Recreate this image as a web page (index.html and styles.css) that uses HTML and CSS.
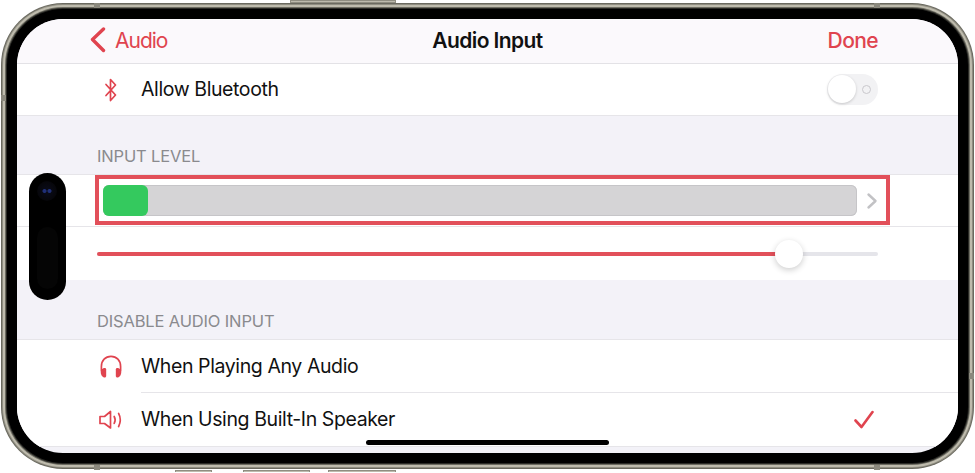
FILE: index.html
```html
<!DOCTYPE html>
<html lang="en">
<head>
    <meta charset="UTF-8">
    <meta name="viewport" content="width=device-width, initial-scale=1.0">
    <title>Audio Input</title>
    <link rel="stylesheet" href="styles.css">
</head>
<body>
    <div class="phone">
        <span class="side-btn top-btn"></span>
        <span class="side-btn bottom-btn-a"></span>
        <span class="side-btn bottom-btn-b"></span>
        <span class="side-btn bottom-btn-c"></span>
        <span class="band band-top-l"></span>
        <span class="band band-top-r"></span>
        <span class="band band-bottom-l"></span>
        <span class="band band-bottom-r"></span>
        <span class="band band-left"></span>
        <span class="band band-right"></span>

        <div class="screen">
            <div class="island"><span class="camera"></span><span class="sensor"></span></div>

            <header class="nav">
                <div class="nav-back">
                    <svg class="back-icon" width="16" height="26" viewBox="0 0 16 26"><path d="M13.5 2 L2.5 12.5 L13.5 23.5"/></svg>
                    <span class="nav-back-text">Audio</span>
                </div>
                <div class="nav-title">Audio Input</div>
                <div class="nav-done">Done</div>
            </header>

            <div class="list">
                <div class="row">
                    <div class="row-icon">
                        <svg width="14" height="26" viewBox="0 0 14 26"><path class="line" d="M2 7.5 L11.5 18 L6.5 23.5 V2.5 L11.5 8 L2 18.5"/></svg>
                    </div>
                    <div class="row-label">Allow Bluetooth</div>
                    <div class="toggle"><span class="toggle-knob"></span><span class="toggle-off"></span></div>
                </div>
            </div>

            <div class="section-title first-title">INPUT LEVEL</div>
            <div class="list">
                <div class="row level-row">
                    <div class="level-bar"><div class="level-fill"></div></div>
                    <svg class="level-chevron" width="12" height="18" viewBox="0 0 12 18"><path d="M2.5 2.5 L9.5 9 L2.5 15.5"/></svg>
                    <div class="callout"></div>
                </div>
                <div class="row slider-row">
                    <div class="slider">
                        <div class="slider-done"></div>
                        <div class="slider-knob"></div>
                    </div>
                </div>
            </div>

            <div class="section-title">DISABLE AUDIO INPUT</div>
            <div class="list">
                <div class="row sep-row">
                    <div class="row-icon">
                        <svg width="24" height="24" viewBox="0 0 24 24">
                            <path class="line" d="M2.4 16 V11.5 C2.4 5.4 6.4 1.4 12 1.4 C17.6 1.4 21.6 5.4 21.6 11.5 V16"/>
                            <path class="fill" d="M5.6 13 C6.7 13 7.2 13.7 7.2 14.6 V20.8 C7.2 21.9 6.5 22.6 5.6 22.6 C3.6 22.6 1.8 20 1.8 17.6 C1.8 15 3.6 13 5.6 13 Z"/>
                            <path class="fill" d="M18.4 13 C17.3 13 16.8 13.7 16.8 14.6 V20.8 C16.8 21.9 17.5 22.6 18.4 22.6 C20.4 22.6 22.2 20 22.2 17.6 C22.2 15 20.4 13 18.4 13 Z"/>
                        </svg>
                    </div>
                    <div class="row-label">When Playing Any Audio</div>
                </div>
                <div class="row last-row">
                    <div class="row-icon">
                        <svg width="24" height="20" viewBox="0 0 24 20">
                            <path class="line" d="M1 6.5 H5.5 L11.5 1.5 V18 L5.5 13.5 H1 Z"/>
                            <path class="line" d="M15.2 6.5 C16.4 8.6 16.4 11.2 15.2 13.4"/>
                            <path class="line" d="M19.6 3.4 C21.6 7.2 21.6 12.6 19.6 16.6"/>
                        </svg>
                    </div>
                    <div class="row-label">When Using Built-In Speaker</div>
                    <svg class="check" width="20" height="20" viewBox="0 0 20 20"><path d="M1.5 10.5 L7.5 17 L18.5 2"/></svg>
                </div>
            </div>

            <div class="home-bar"></div>
        </div>
    </div>
</body>
</html>
```

FILE: styles.css
```css
body {
    margin: 0;
    padding: 19px 17px;
    background: #fff;
    font-family: Inter, "Liberation Sans", sans-serif;
    overflow: hidden;
}

.phone {
    position: relative;
    width: 941px;
    height: 434px;
}

/* titanium frame sits in rings round the screen */
.screen {
    position: relative;
    width: 100%;
    height: 100%;
    overflow: hidden;
    background: #f3f2f8;
    border-radius: 46px;
    box-shadow:
        0 0 0 10px #000,
        0 0 0 11px #2a2a26,
        0 0 0 12px #6d6c62,
        0 0 0 14px #bebbad,
        0 0 0 15px #8f8d81,
        0 0 0 16px #6b6a60;
}

.side-btn {
    position: absolute;
    height: 3px;
    background: #bdbaad;
    border: 1px solid #8f8d81;
    box-sizing: border-box;
}

.top-btn { top: -19px; left: 273px; width: 106px; }
.bottom-btn-a { top: 451px; left: 158px; width: 37px; }
.bottom-btn-b { top: 451px; left: 226px; width: 67px; }
.bottom-btn-c { top: 451px; left: 311px; width: 68px; }

.band {
    position: absolute;
    background: #8b897e;
    width: 6px;
    height: 5px;
    z-index: 1;
}

.band-top-l { top: -16px; left: 77px; }
.band-top-r { top: -16px; left: 857px; }
.band-bottom-l { top: 446px; left: 77px; }
.band-bottom-r { top: 446px; left: 857px; }
.band-left { top: 76px; left: -16px; width: 5px; height: 6px; }
.band-right { top: 354px; left: 952px; width: 5px; height: 6px; }

.island {
    position: absolute;
    left: 12px;
    top: 154px;
    width: 37px;
    height: 127px;
    background: #000;
    border-radius: 19px;
    z-index: 5;
}

.camera {
    position: absolute;
    left: 8px;
    top: 8px;
    width: 20px;
    height: 20px;
    border-radius: 50%;
    background:
        radial-gradient(circle at 7.5px 10px, #1f2f78 0, #1f2f78 1.5px, transparent 2.5px),
        radial-gradient(circle at 12.5px 10px, #1f2f78 0, #1f2f78 1.5px, transparent 2.5px),
        radial-gradient(circle, #0a0c1c 0%, #07070c 60%, #020203 100%);
}

.sensor {
    position: absolute;
    left: 8px;
    top: 54px;
    width: 21px;
    height: 62px;
    border-radius: 11px;
    background: #050505;
}

.nav {
    display: flex;
    align-items: center;
    justify-content: space-between;
    position: relative;
    height: 45px;
    padding: 0 80px 2px 73px;
    box-sizing: border-box;
    background: #fbf9fc;
    border-bottom: 1px solid #e3e2e6;
    font-size: 21px;
    letter-spacing: -0.6px;
    color: #e0444f;
}

.nav-back {
    display: flex;
    align-items: center;
    gap: 9px;
}

.nav-back-text {
    letter-spacing: -1px;
}

.back-icon path {
    fill: none;
    stroke: #e0444f;
    stroke-width: 3.4;
    stroke-linecap: round;
    stroke-linejoin: round;
}

.nav-title {
    position: absolute;
    left: 0;
    right: 0;
    text-align: center;
    font-weight: 600;
    color: #111;
}

.nav-done {
    font-weight: 500;
}

.list {
    background: #fff;
}

.row {
    display: flex;
    align-items: center;
    position: relative;
    height: 51px;
    padding: 0 80px;
    border-bottom: 1px solid #e6e5e9;
    font-size: 19.5px;
    letter-spacing: -0.4px;
    color: #111;
}

.row-icon {
    display: flex;
    align-items: center;
    justify-content: center;
    flex: none;
    width: 28px;
    margin-right: 16px;
}

.row-icon .line {
    fill: none;
    stroke: #e0444f;
    stroke-width: 1.7;
    stroke-linejoin: round;
    stroke-linecap: round;
}

.row-icon .fill {
    fill: #e0444f;
}

.row-label {
    flex: 1;
    padding-bottom: 2px;
}

.toggle {
    display: flex;
    align-items: center;
    position: relative;
    width: 51px;
    height: 31px;
    border-radius: 16px;
    background: #f2f2f4;
}

.toggle-knob {
    position: absolute;
    left: 1px;
    top: 1px;
    width: 28px;
    height: 28px;
    border-radius: 50%;
    background: #fff;
    box-shadow: 0 1px 3px rgba(0, 0, 0, 0.18);
}

.toggle-off {
    position: absolute;
    right: 7px;
    top: 11px;
    box-sizing: border-box;
    width: 9px;
    height: 9px;
    border: 1px solid #c9c8cc;
    border-radius: 50%;
}

.section-title {
    display: flex;
    align-items: flex-end;
    height: 60px;
    padding: 0 80px 8px;
    box-sizing: border-box;
    border-bottom: 1px solid #e6e5e9;
    font-size: 16.5px;
    letter-spacing: -0.15px;
    color: #8a8a8e;
}

.first-title {
    height: 59px;
}

.level-row {
    padding-left: 86px;
}

.level-bar {
    flex: none;
    position: relative;
    width: 754px;
    height: 31px;
    background: #d5d4d6;
    border-radius: 6px;
    box-shadow: inset 0 0 0 1px #c6c5c8;
}

.level-fill {
    width: 45px;
    height: 100%;
    background: #34c95e;
    border-radius: 6px;
}

.level-chevron {
    margin-left: 9px;
}

.level-chevron path {
    fill: none;
    stroke: #c2c2c5;
    stroke-width: 2.4;
    stroke-linecap: round;
    stroke-linejoin: round;
}

.callout {
    position: absolute;
    left: 78px;
    top: 0;
    width: 795px;
    height: 50px;
    box-sizing: border-box;
    border: 4px solid #e2505a;
}

.slider-row {
    height: 53px;
    border-bottom: 0;
}

.slider {
    position: relative;
    width: 100%;
    height: 4px;
    background: #e5e5ea;
    border-radius: 2px;
}

.slider-done {
    width: 692px;
    height: 100%;
    background: #e2505a;
    border-radius: 2px;
}

.slider-knob {
    position: absolute;
    left: 678px;
    top: -12px;
    width: 28px;
    height: 28px;
    border-radius: 50%;
    background: #fff;
    box-shadow: 0 2px 6px rgba(0, 0, 0, 0.2);
}

.sep-row {
    border-bottom: 0;
    height: 53px;
}

.last-row {
    height: 53px;
}

.sep-row::after {
    content: "";
    position: absolute;
    left: 124px;
    right: 0;
    bottom: 0;
    height: 1px;
    background: #e6e5e9;
}

.check path {
    fill: none;
    stroke: #e0444f;
    stroke-width: 2.6;
    stroke-linecap: round;
    stroke-linejoin: round;
}

.check {
    margin-right: 4px;
}

.home-bar {
    position: absolute;
    left: 349px;
    bottom: 8px;
    width: 243px;
    height: 5px;
    background: #000;
    border-radius: 3px;
}
```
